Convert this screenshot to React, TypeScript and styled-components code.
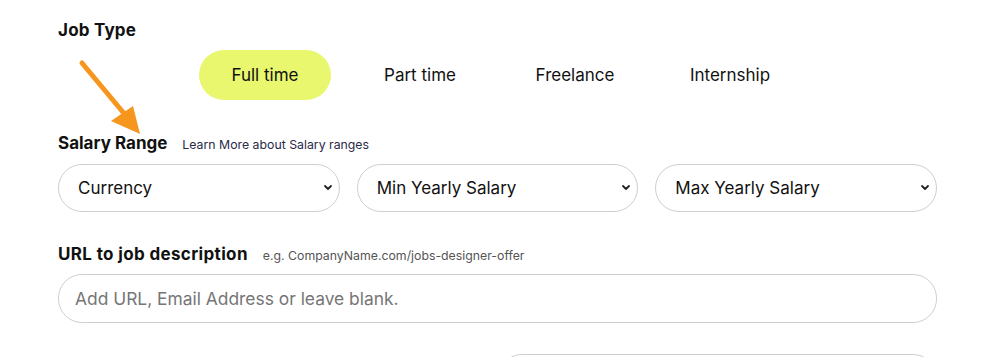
import React, { useState } from "react";
import styled, { createGlobalStyle } from "styled-components";

const GlobalStyle = createGlobalStyle`
  body {
    margin: 0;
    background: #ffffff;
    font-family: Inter, "Liberation Sans", Arial, sans-serif;
    color: #111111;
  }
`;

const Page = styled.div`
  position: relative;
  width: 879px;
  padding: 20px 0 0 58px;
  display: flex;
  flex-direction: column;
`;

const Label = styled.div<{ $top: number }>`
  display: flex;
  align-items: baseline;
  gap: 15px;
  margin-top: ${({ $top }) => $top}px;
  height: 20px;
  line-height: 20px;
`;

const LabelText = styled.span<{ $spacing?: number }>`
  font-size: 17px;
  font-weight: 700;
  color: #111111;
  letter-spacing: ${({ $spacing }) => $spacing ?? 0}px;
`;

const Hint = styled.span<{ $color: string }>`
  font-size: 12.3px;
  color: ${({ $color }) => $color};
`;

const PillRow = styled.div`
  display: flex;
  gap: 23px;
  margin-top: 10px;
  padding-left: 141px;
`;

const Pill = styled.button<{ $active: boolean }>`
  width: 132px;
  height: 50px;
  border: none;
  border-radius: 25px;
  background: ${({ $active }) => ($active ? "#e9f76e" : "transparent")};
  font-family: inherit;
  font-size: 17px;
  color: #111111;
  cursor: pointer;
  padding: 0;
`;

const SelectRow = styled.div`
  display: grid;
  grid-template-columns: repeat(3, 1fr);
  gap: 17px;
  margin-top: 11px;
`;

const SelectBox = styled.div`
  height: 48px;
  border: 1px solid #cfcfcf;
  border-radius: 24px;
  display: flex;
  align-items: center;
  justify-content: space-between;
  padding: 0 5px 0 19px;
  box-sizing: border-box;
  font-size: 17px;
  color: #111111;
`;

const Input = styled.input`
  margin-top: 10px;
  height: 49px;
  border: 1px solid #cfcfcf;
  border-radius: 24px;
  padding: 0 16px;
  box-sizing: border-box;
  font-family: inherit;
  font-size: 17.4px;
  color: #111111;
  outline: none;
  &::placeholder {
    color: #767676;
  }
`;

const NextRow = styled.div`
  display: flex;
  justify-content: flex-end;
  margin-top: 31px;
`;

const NextBox = styled.div`
  width: 439px;
  height: 48px;
  border: 1px solid #cfcfcf;
  border-radius: 24px;
  box-sizing: border-box;
`;

const Arrow = styled.svg`
  position: absolute;
  left: 70px;
  top: 55px;
  pointer-events: none;
`;

const Chevron = () => (
  <svg width="12" height="8" viewBox="0 0 12 8">
    <path d="M3 2 L6 5 L9 2" fill="none" stroke="#222" strokeWidth="1.8" strokeLinecap="round" strokeLinejoin="round" />
  </svg>
);

const jobTypes = ["Full time", "Part time", "Freelance", "Internship"];
const selects = ["Currency", "Min Yearly Salary", "Max Yearly Salary"];

export default function App() {
  const [jobType, setJobType] = useState("Full time");

  return (
    <>
      <GlobalStyle />
      <Page>
        <Label $top={0}>
          <LabelText $spacing={0.2}>Job Type</LabelText>
        </Label>
        <PillRow>
          {jobTypes.map((t) => (
            <Pill key={t} $active={t === jobType} onClick={() => setJobType(t)}>
              {t}
            </Pill>
          ))}
        </PillRow>

        <Label $top={33}>
          <LabelText>Salary Range</LabelText>
          <Hint $color="#2a2a48">Learn More about Salary ranges</Hint>
        </Label>
        <SelectRow>
          {selects.map((s) => (
            <SelectBox key={s}>
              {s}
              <Chevron />
            </SelectBox>
          ))}
        </SelectRow>

        <Label $top={32}>
          <LabelText $spacing={0.35}>URL to job description</LabelText>
          <Hint $color="#555555">e.g. CompanyName.com/jobs-designer-offer</Hint>
        </Label>
        <Input placeholder="Add URL, Email Address or leave blank." />

        <NextRow>
          <NextBox />
        </NextRow>

        <Arrow width="90" height="95" viewBox="0 0 90 95">
          <line x1="12" y1="8" x2="57" y2="62" stroke="#f7961e" strokeWidth="5" strokeLinecap="round" />
          <polygon points="41,66 63,51 70,79" fill="#f7961e" />
        </Arrow>
      </Page>
    </>
  );
}
